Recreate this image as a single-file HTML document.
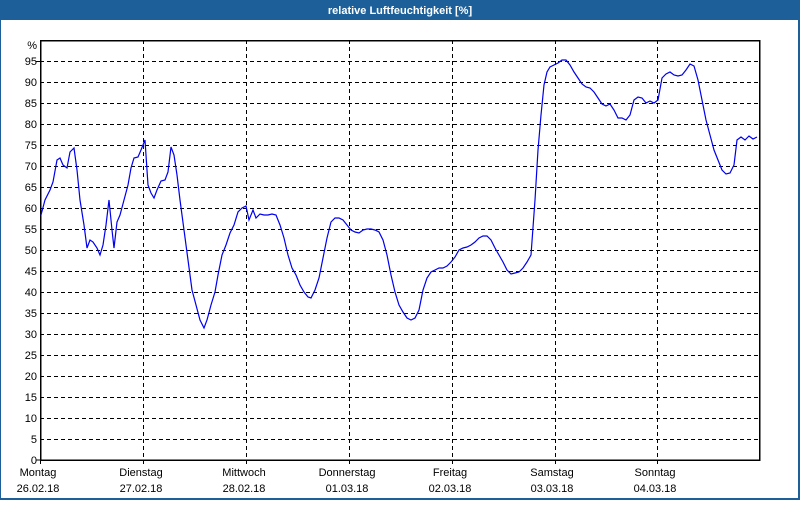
<!DOCTYPE html>
<html><head><meta charset="utf-8"><style>
body{margin:0;width:800px;height:500px;overflow:hidden;background:#fff;font-family:"Liberation Sans",sans-serif}
</style></head><body>
<svg width="800" height="500" xmlns="http://www.w3.org/2000/svg" font-family="Liberation Sans, sans-serif" font-size="11">
<rect x="0" y="0" width="800" height="500" fill="#1c5f99"/>
<rect x="1" y="20" width="797" height="478" fill="#fff"/>
<text x="400" y="14" fill="#fff" font-weight="bold" text-anchor="middle">relative Luftfeuchtigkeit [%]</text>
<g stroke="#000" stroke-width="1" stroke-dasharray="4,3" shape-rendering="crispEdges">
<line x1="40" x2="760" y1="61.5" y2="61.5"/><line x1="40" x2="760" y1="82.5" y2="82.5"/><line x1="40" x2="760" y1="103.5" y2="103.5"/><line x1="40" x2="760" y1="124.5" y2="124.5"/><line x1="40" x2="760" y1="145.5" y2="145.5"/><line x1="40" x2="760" y1="166.5" y2="166.5"/><line x1="40" x2="760" y1="187.5" y2="187.5"/><line x1="40" x2="760" y1="208.5" y2="208.5"/><line x1="40" x2="760" y1="229.5" y2="229.5"/><line x1="40" x2="760" y1="250.5" y2="250.5"/><line x1="40" x2="760" y1="271.5" y2="271.5"/><line x1="40" x2="760" y1="292.5" y2="292.5"/><line x1="40" x2="760" y1="313.5" y2="313.5"/><line x1="40" x2="760" y1="334.5" y2="334.5"/><line x1="40" x2="760" y1="355.5" y2="355.5"/><line x1="40" x2="760" y1="376.5" y2="376.5"/><line x1="40" x2="760" y1="397.5" y2="397.5"/><line x1="40" x2="760" y1="418.5" y2="418.5"/><line x1="40" x2="760" y1="439.5" y2="439.5"/>
<line x1="143.5" x2="143.5" y1="40" y2="464"/><line x1="246.5" x2="246.5" y1="40" y2="464"/><line x1="349.5" x2="349.5" y1="40" y2="464"/><line x1="452.5" x2="452.5" y1="40" y2="464"/><line x1="555.5" x2="555.5" y1="40" y2="464"/><line x1="657.5" x2="657.5" y1="40" y2="464"/>
</g>
<g stroke="#000" shape-rendering="crispEdges">
<rect x="40.5" y="40.5" width="719" height="419.5" fill="none" stroke-width="1.5"/>
<line x1="36" x2="40" y1="61.5" y2="61.5"/><line x1="36" x2="40" y1="460" y2="460"/>
<line x1="40.5" x2="40.5" y1="460" y2="464"/>
</g>
<g text-anchor="end" fill="#000">
<text x="37" y="49">%</text>
<text x="37" y="65">95</text><text x="37" y="86">90</text><text x="37" y="107">85</text><text x="37" y="128">80</text><text x="37" y="149">75</text><text x="37" y="170">70</text><text x="37" y="191">65</text><text x="37" y="212">60</text><text x="37" y="233">55</text><text x="37" y="254">50</text><text x="37" y="275">45</text><text x="37" y="296">40</text><text x="37" y="317">35</text><text x="37" y="338">30</text><text x="37" y="359">25</text><text x="37" y="380">20</text><text x="37" y="401">15</text><text x="37" y="422">10</text><text x="37" y="443">5</text><text x="37" y="464">0</text>
</g>
<g text-anchor="middle" fill="#000">
<text x="38" y="476">Montag</text><text x="38" y="492">26.02.18</text>
<text x="141" y="476">Dienstag</text><text x="141" y="492">27.02.18</text>
<text x="244" y="476">Mittwoch</text><text x="244" y="492">28.02.18</text>
<text x="347" y="476">Donnerstag</text><text x="347" y="492">01.03.18</text>
<text x="450" y="476">Freitag</text><text x="450" y="492">02.03.18</text>
<text x="552" y="476">Samstag</text><text x="552" y="492">03.03.18</text>
<text x="655" y="476">Sonntag</text><text x="655" y="492">04.03.18</text>
</g>
<polyline fill="none" stroke="#0000ee" stroke-width="1.2" points="41,215 45,200 50,190 53,182 57,160 60,158 63,165 67,168 70,152 74,148 77,170 80,200 84,225 87,248 90,240 93,242 97,248 100,255 103,245 106,225 109,200 112,230 114,248 117,222 120,215 124,200 128,185 131,168 134,158 138,157 141,150 145,140 148,185 151,193 154,198 157,190 161,181 165,180 168,172 171,147 174,155 177,175 180,200 184,230 188,260 192,290 196,305 200,320 204,328 207,320 211,305 215,292 218,275 222,255 226,245 230,233 234,225 238,212 242,208 246,206 249,220 253,210 256,218 260,214 264,215 268,215 272,214 276,215 280,225 284,238 288,255 292,268 296,275 300,285 304,292 308,297 311,298 315,290 319,278 323,258 327,238 331,222 335,218 339,218 343,220 347,225 351,230 355,232 359,233 363,230 367,229 371,229 375,230 379,232 383,240 387,255 391,275 395,292 399,305 403,312 407,318 411,320 415,318 419,310 423,290 427,278 431,272 435,270 439,268 443,268 447,266 451,262 455,257 459,250 463,248 467,247 471,245 475,242 479,238 483,236 487,236 491,240 495,248 499,255 503,262 507,270 511,274 515,273 519,272 523,268 527,262 531,255 535,200 538,150 541,115 544,85 547,72 550,67 554,65 558,63 562,60 566,60 570,65 574,72 578,78 582,84 586,87 590,88 594,92 598,98 602,104 606,106 610,104 614,110 618,118 622,118 626,120 630,115 634,100 638,97 642,98 646,103 650,101 654,103 658,100 662,78 666,74 670,72 674,75 678,76 682,75 686,70 690,64 694,66 698,80 702,100 706,120 710,135 714,150 718,160 722,170 726,174 730,173 734,165 737,140 741,137 745,140 749,136 753,139 757,137"/>
</svg>
</body></html>
